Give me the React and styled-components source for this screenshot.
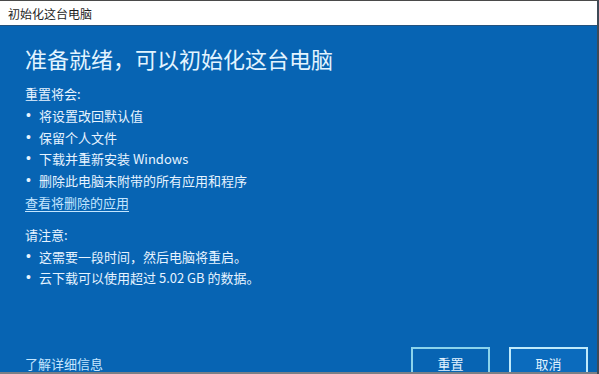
import React from "react";
import styled, { createGlobalStyle } from "styled-components";

const Global = createGlobalStyle`
  html, body {
    margin: 0;
    padding: 0;
    background: #ffffff;
  }
  body {
    font-family: "Noto Sans CJK SC", "Noto Sans", sans-serif;
  }
`;

const Window = styled.div`
  width: 599px;
  height: 374px;
  box-sizing: border-box;
  border-top: 1px solid #4a4a4a;
  border-right: 2px solid #3e4a56;
  display: flex;
  flex-direction: column;
  overflow: hidden;
`;

const TitleBar = styled.div`
  height: 25px;
  flex: none;
  box-sizing: border-box;
  background: #ffffff;
  border-bottom: 1px solid #24527e;
  padding-left: 8px;
  display: flex;
  align-items: center;
  font-size: 12px;
  color: #1e1e1e;
`;

const Main = styled.div`
  flex: 1;
  min-height: 0;
  overflow: hidden;
  background: #0764b3;
  color: #e6f3ff;
  padding: 17px 9px 0 25px;
  display: flex;
  flex-direction: column;
`;

const Heading = styled.h1`
  margin: 0;
  font-size: 22px;
  line-height: 30px;
  font-weight: 400;
  color: #e2f4ff;
`;

const Section = styled.div`
  margin-top: ${(p) => p.$top}px;
  font-size: 13px;
  line-height: 21.8px;
`;

const Label = styled.div``;

const List = styled.ul`
  margin: 0;
  padding: 0;
  list-style: none;
`;

const Item = styled.li`
  position: relative;
  padding-left: 14px;

  &::before {
    content: "•";
    position: absolute;
    left: 1px;
    top: 0;
    font-family: "Liberation Sans", sans-serif;
    font-size: 14px;
  }
`;

const TextLink = styled.a`
  color: #c4e6ff;
  text-decoration: underline;
  text-underline-offset: 3px;
  cursor: pointer;
`;

const Footer = styled.div`
  margin-top: auto;
  margin-bottom: -7px;
  height: 32px;
  flex: none;
  display: flex;
  align-items: center;
  justify-content: space-between;
  font-size: 13px;
`;

const Buttons = styled.div`
  display: flex;
  gap: 19px;
`;

const Button = styled.button`
  width: 79px;
  height: 32px;
  box-sizing: border-box;
  border: 2px solid ${(p) => (p.$focus ? "#bfeafb" : "#8ad3ec")};
  background: ${(p) => (p.$focus ? "#0b6bbd" : "#0764b3")};
  color: #e2f3ff;
  font-family: inherit;
  font-size: 13px;
  padding: 0;
  cursor: pointer;
`;

const BottomEdge = styled.div`
  height: 2px;
  flex: none;
  background: #7a7f86;
`;

export default function App() {
  return (
    <>
      <Global />
      <Window>
        <TitleBar>初始化这台电脑</TitleBar>
        <Main>
          <Heading>准备就绪，可以初始化这台电脑</Heading>
          <Section $top={10}>
            <Label>重置将会:</Label>
            <List>
              <Item>将设置改回默认值</Item>
              <Item>保留个人文件</Item>
              <Item>下载并重新安装 Windows</Item>
              <Item>删除此电脑未附带的所有应用和程序</Item>
            </List>
            <TextLink>查看将删除的应用</TextLink>
          </Section>
          <Section $top={10}>
            <Label>请注意:</Label>
            <List>
              <Item>这需要一段时间，然后电脑将重启。</Item>
              <Item>云下载可以使用超过 5.02 GB 的数据。</Item>
            </List>
          </Section>
          <Footer>
            <TextLink>了解详细信息</TextLink>
            <Buttons>
              <Button>重置</Button>
              <Button $focus>取消</Button>
            </Buttons>
          </Footer>
        </Main>
        <BottomEdge />
      </Window>
    </>
  );
}
